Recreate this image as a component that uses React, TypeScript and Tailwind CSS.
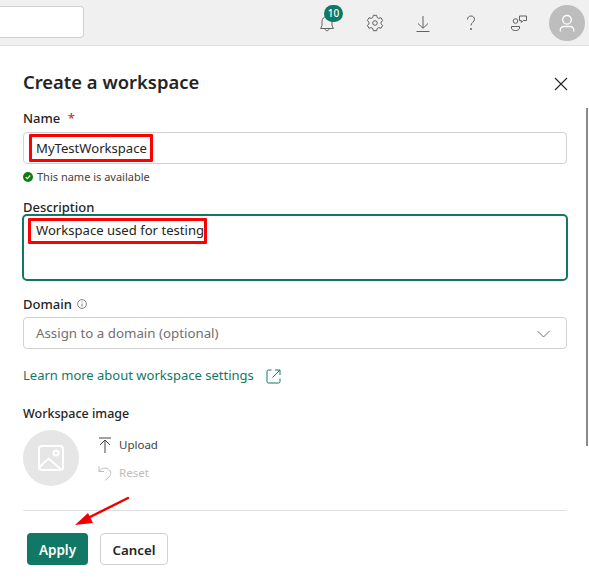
import React from "react";

const font = { fontFamily: '"Noto Sans", "Open Sans", sans-serif' };

function Icon({ children, className = "", size = 20, vb = 20 }: { children: React.ReactNode; className?: string; size?: number; vb?: number }) {
  return (
    <svg width={size} height={size} viewBox={`0 0 ${vb} ${vb}`} fill="none" stroke="currentColor" strokeWidth="1" className={className}>
      {children}
    </svg>
  );
}

function Mark({ className }: { className: string }) {
  return <div className={`absolute border-[3px] border-[#ff0000] rounded-[1px] ${className}`} />;
}

export default function App() {
  return (
    <div className="relative w-[589px] h-[578px] overflow-hidden bg-white text-[#242424]" style={font}>
      {/* top bar */}
      <header className="h-[46px] bg-[#f0f0f0] border-b border-[#e0e0e0] flex items-center justify-between">
        <div className="w-[84px] h-[32px] -mt-[1px] bg-white border border-[#d1d1d1] border-l-0 rounded-r-[4px]" />
        <div className="flex items-center text-[#616161]">
          <div className="relative w-[20px] h-[20px] mr-[28px] mt-[2px]">
            <Icon size={20}>
              <path d="M10 2.500c-3 0-5 2.200-5 5v4L3.600 14.500h12.800L15 11.500v-4c0-2.800-2-5-5-5z" />
              <path d="M8 14.500c0 1.300.9 2.200 2 2.200s2-.9 2-2.200" />
            </Icon>
            <div className="absolute left-[7px] -top-[9px] w-[19px] h-[17px] rounded-full bg-[#117865] text-white text-[10px] font-medium leading-[17px] text-center">10</div>
          </div>
          <div className="mr-[28px]">
            <Icon size={20}>
              <path d="M8.300 2.300h3.400l.5 2.200 1.600.9 2.200-.7 1.700 2.900-1.700 1.500v1.800l1.700 1.500-1.700 2.900-2.200-.7-1.600.9-.5 2.200H8.300l-.5-2.200-1.600-.9-2.200.7-1.700-2.900 1.700-1.500V9.100L2.300 7.600 4 4.700l2.200.7 1.600-.9z" strokeLinejoin="round" />
              <circle cx="10" cy="10" r="2.300" />
            </Icon>
          </div>
          <div className="mr-[28px]">
            <Icon size={20}>
              <path d="M10 3v12M5 10.500l5 4.800 5-4.800M3.500 18.500h13" />
            </Icon>
          </div>
          <div className="mr-[28px]">
            <Icon size={20}>
              <path d="M6.500 6.500C6.500 4.300 8 3 10 3s3.500 1.300 3.500 3.200c0 3-3.500 3.200-3.500 6.300" />
              <circle cx="10" cy="16" r=".6" fill="currentColor" />
            </Icon>
          </div>
          <div className="mr-[20px]">
            <Icon size={20}>
              <circle cx="6.500" cy="8" r="2.300" />
              <path d="M2.500 13.500h8v1.500c0 1.700-1.800 2.500-4 2.500s-4-.8-4-2.500z" />
              <path d="M10.500 3h7v4.500h-3.200l-2 2V7.500h-1.800z" strokeLinejoin="round" />
            </Icon>
          </div>
          <div className="w-[36px] h-[36px] mr-[4px] rounded-full bg-[#bdbdbd] flex items-center justify-center text-white">
            <svg width="20" height="20" viewBox="0 0 20 20" fill="none" stroke="currentColor" strokeWidth="1.300">
              <circle cx="10" cy="6.800" r="4.300" />
              <path d="M3.300 18.500v-1.500c0-2 1.700-3.500 3.500-3.500h6.400c1.800 0 3.500 1.500 3.500 3.500v1.500" />
            </svg>
          </div>
        </div>
      </header>

      {/* panel */}
      <main className="pl-[23px] pr-[22px] pt-[22px]">
        <div className="flex items-center justify-between h-[28px]">
          <h1 className="text-[18.400px] font-semibold leading-[28px]">Create a workspace</h1>
          <svg width="14" height="14" viewBox="0 0 14 14" fill="none" stroke="#242424" strokeWidth="1.100" className="mr-[-1px] mt-[3px]">
            <path d="M1 1l12 12M13 1L1 13" />
          </svg>
        </div>

        <div className="mt-[13px] text-[13px] font-medium leading-[18px]">
          Name <span className="text-[#c4314b] ml-[4px]">*</span>
        </div>
        <div className="mt-[5px] h-[32px] border border-[#d1d1d1] rounded-[4px] pl-[12px] pt-[1px] flex items-center text-[13.100px]">MyTestWorkspace</div>
        <div className="mt-[5px] flex items-center gap-[4px] text-[11px] leading-[16px] text-[#424242]">
          <svg width="10" height="10" viewBox="0 0 10 10">
            <circle cx="5" cy="5" r="5" fill="#107c10" />
            <path d="M2.700 5.200l1.600 1.500 3-3.200" fill="none" stroke="#fff" strokeWidth="1.100" />
          </svg>
          This name is available
        </div>

        <div className="mt-[14px] text-[13px] font-medium leading-[16px]">Description</div>
        <div className="mt-[-1px] -mx-[1px] h-[67px] border-2 border-[#117865] rounded-[5px] pl-[12px] pt-[4px] text-[13.100px] leading-[20px]">Workspace used for testing</div>

        <div className="mt-[14px] flex items-center gap-[5px] text-[13px] font-medium leading-[18px]">
          Domain
          <svg width="10" height="10" viewBox="0 0 10 10" fill="none" stroke="#616161" strokeWidth=".8">
            <circle cx="5" cy="5" r="4.400" />
            <path d="M5 4.500v3M5 2.500v1" />
          </svg>
        </div>
        <div className="mt-[4px] h-[32px] border border-[#d1d1d1] rounded-[4px] pl-[12px] pr-[16px] pt-[1px] flex items-center justify-between text-[13.300px] text-[#707070]">
          Assign to a domain (optional)
          <svg width="13" height="8" viewBox="0 0 13 8" fill="none" stroke="#707070" strokeWidth="1">
            <path d="M.5 1l6 6 6-6" />
          </svg>
        </div>

        <div className="mt-[16px] flex items-center text-[13px] text-[#117865] leading-[20px]">
          <span>Learn more about workspace settings</span>
          <svg width="15" height="15" viewBox="0 0 15 15" fill="none" stroke="#117865" strokeWidth="1" className="ml-[12px] mt-[2px]">
            <path d="M5.500 1H2.500A1.500 1.500 0 0 0 1 2.500v10A1.500 1.500 0 0 0 2.500 14h10a1.500 1.500 0 0 0 1.500-1.500v-3M9 1h5v5M14 1L6.500 8.500" />
          </svg>
        </div>

        <div className="mt-[20px] text-[12.500px] font-medium leading-[18px]">Workspace image</div>
        <div className="mt-[7px] flex items-start">
          <div className="w-[56px] h-[56px] rounded-full bg-[#e6e6e6] flex items-center justify-center">
            <svg width="26" height="26" viewBox="0 0 26 26" fill="none" stroke="#fff" strokeWidth="2">
              <rect x="1" y="1" width="24" height="24" rx="3" />
              <circle cx="18" cy="8" r="2.500" />
              <path d="M1.500 22l9-8.500 12.500 11" />
            </svg>
          </div>
          <div className="ml-[19px] flex flex-col">
            <div className="flex items-center h-[28px] text-[11.500px] text-[#424242] mt-[1px]">
              <svg width="14" height="16" viewBox="0 0 14 16" fill="none" stroke="#424242" strokeWidth="1">
                <path d="M1 1h12M7 16V3.500M2 8l5-5 5 5" />
              </svg>
              <span className="ml-[7px]">Upload</span>
            </div>
            <div className="flex items-center h-[28px] text-[11.500px] text-[#bdbdbd]">
              <svg width="14" height="16" viewBox="0 0 14 16" fill="none" stroke="#bdbdbd" strokeWidth="1">
                <path d="M1 1.500v5h5M1 6.500C3 3.500 6 2.500 9 3.500c4 1.500 5 5.500 2 8.500l-4 3.500" />
              </svg>
              <span className="ml-[7px]">Reset</span>
            </div>
          </div>
        </div>

        <div className="mt-[23px] border-t border-[#e0e0e0]" />
        <div className="mt-[22px] ml-[4px] flex gap-[12px]">
          <button className="w-[61px] h-[32px] pt-[3px] rounded-[4px] bg-[#117865] text-white text-[13.500px] font-semibold">Apply</button>
          <button className="w-[68px] h-[32px] pt-[3px] rounded-[4px] bg-white border border-[#d1d1d1] text-[13.300px] font-semibold">Cancel</button>
        </div>
      </main>

      {/* scrollbar */}
      <div className="absolute left-[586px] top-[108px] w-[2px] h-[338px] bg-[#8a8a8a]" />

      {/* annotations */}
      <Mark className="left-[29px] top-[134px] w-[124px] h-[28px]" />
      <Mark className="left-[28px] top-[218px] w-[179px] h-[26px]" />
      <svg className="absolute left-[74px] top-[494px]" width="58" height="34" viewBox="0 0 58 34">
        <path d="M54 4L14 24" stroke="#f00000" strokeWidth="2.500" strokeLinecap="round" />
        <path d="M1 31l18-2-5-10z" fill="#f00000" />
      </svg>
    </div>
  );
}
